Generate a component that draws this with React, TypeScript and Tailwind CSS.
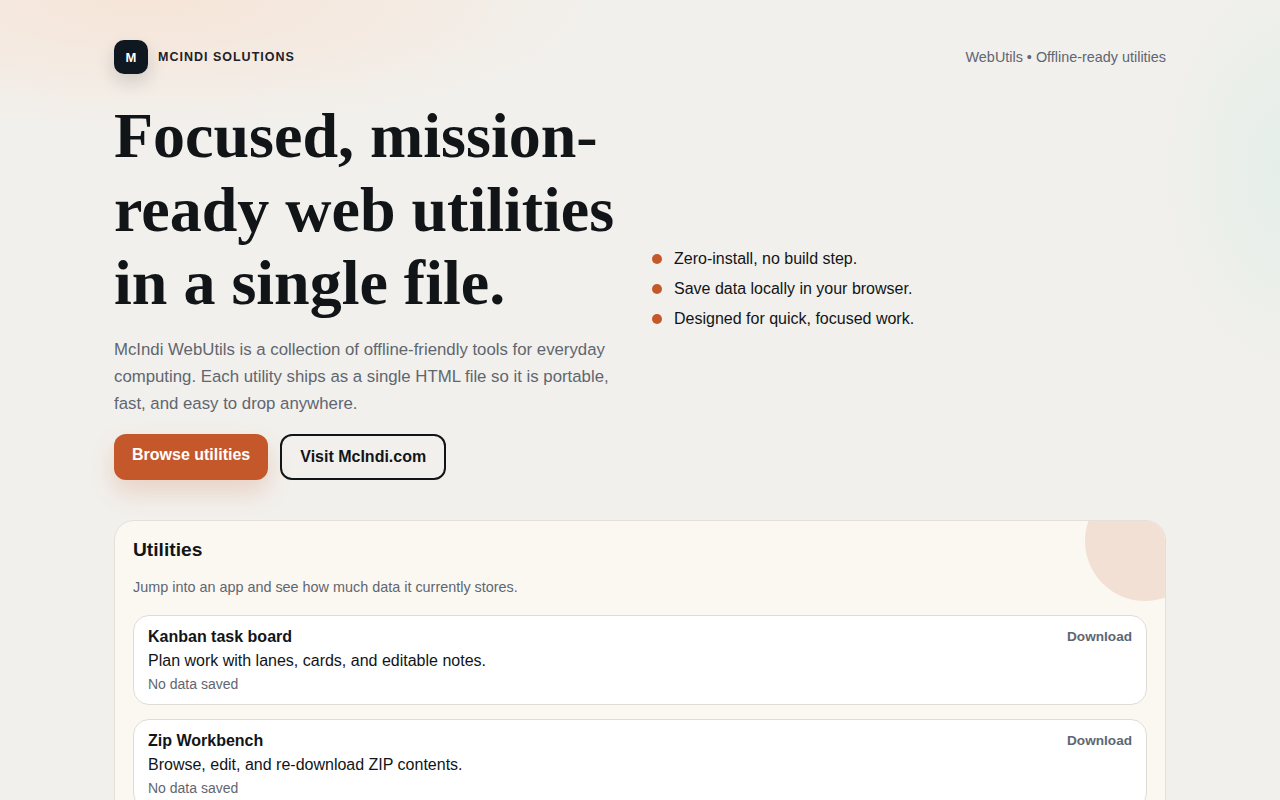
import React from 'react';

const sans = { fontFamily: '"Liberation Sans", Arial, sans-serif' };

const highlights = [
  'Zero-install, no build step.',
  'Save data locally in your browser.',
  'Designed for quick, focused work.',
];

const utilities = [
  { name: 'Kanban task board', description: 'Plan work with lanes, cards, and editable notes.' },
  { name: 'Zip Workbench', description: 'Browse, edit, and re-download ZIP contents.' },
];

function UtilityRow({ name, description }: { name: string; description: string }) {
  return (
    <div className="flex h-[90px] shrink-0 items-start justify-between rounded-[16px] border border-[#e0dcd4] bg-white px-[14px] pt-[11px]">
      <div className="flex flex-col">
        <div className="text-[16px] leading-[20px] font-bold text-[#111518]">{name}</div>
        <div className="mt-[4px] text-[16px] leading-[20px] text-[#111518]">{description}</div>
        <div className="mt-[3px] text-[14px] leading-[20px] text-[#5f6670]">No data saved</div>
      </div>
      <a className="mt-[2px] text-[13.6px] leading-[16px] font-bold text-[#5f6670]">Download</a>
    </div>
  );
}

export default function App() {
  return (
    <div
      className="h-[800px] overflow-hidden bg-[#f2f0ec] bg-[radial-gradient(ellipse_440px_125px_at_150px_0px,#f6e5d8_0%,rgba(246,229,216,0.55)_50%,rgba(246,229,216,0)_100%),radial-gradient(ellipse_140px_220px_at_1290px_170px,#e4eee9_0%,rgba(228,238,233,0)_100%)]"
      style={sans}
    >
      <div className="mx-auto flex w-[1052px] flex-col pt-[40px]">
        {/* Brand bar */}
        <header className="flex items-center justify-between">
          <div className="flex items-center gap-[10px]">
            <div className="flex h-[34px] w-[34px] items-center justify-center rounded-[10px] bg-[#0f1720] pt-[1px] text-[13px] font-bold text-white shadow-[0_8px_18px_rgba(15,23,32,0.15)]">
              M
            </div>
            <span className="text-[12.5px] font-bold tracking-[0.08em] text-[#1d2228]">MCINDI SOLUTIONS</span>
          </div>
          <span className="pt-[2px] text-[14.4px] text-[#5f6670]">WebUtils • Offline-ready utilities</span>
        </header>

        {/* Hero */}
        <section className="mt-[25px] flex items-center gap-[32px]">
          <div className="w-[506px] shrink-0">
            <h1
              className="text-[64px] leading-[73.6px] font-bold text-[#111518]"
              style={{ fontFamily: '"Liberation Serif", "Times New Roman", serif' }}
            >
              Focused, mission-ready web utilities in a single file.
            </h1>
            <p className="mt-[16px] text-[16.8px] leading-[27px] text-[#5f6670]">
              McIndi WebUtils is a collection of offline-friendly tools for everyday computing. Each utility ships as a
              single HTML file so it is portable, fast, and easy to drop anywhere.
            </p>
            <div className="mt-[17px] flex gap-[12px]">
              <a className="flex h-[46px] items-start rounded-[12px] bg-[#c5582b] px-[18px] pt-[11px] text-[16px] leading-[20px] font-bold text-white shadow-[0_12px_24px_rgba(197,88,43,0.2)]">
                Browse utilities
              </a>
              <a className="flex h-[46px] items-center rounded-[12px] border-2 border-[#111518] px-[18px] text-[16px] font-bold text-[#111518]">
                Visit McIndi.com
              </a>
            </div>
          </div>
          <ul className="flex flex-col gap-[10px]">
            {highlights.map((item) => (
              <li key={item} className="flex items-center gap-[12px] text-[16px] leading-[20px] text-[#111518]">
                <span className="h-[10px] w-[10px] rounded-full bg-[#c5582b]" />
                {item}
              </li>
            ))}
          </ul>
        </section>

        {/* Utilities panel */}
        <section className="relative mt-[40px] overflow-hidden rounded-[20px] border border-[#e4e0d8] bg-[#fbf8f2] px-[18px] pt-[17px] pb-[24px]">
          <div className="absolute -top-[40px] -right-[40px] h-[120px] w-[120px] rounded-full bg-[#f3e0d5]" />
          <h2 className="relative text-[19.2px] leading-[24px] font-bold text-[#111518]">Utilities</h2>
          <p className="relative mt-[15px] text-[14.4px] leading-[20px] text-[#5f6670]">
            Jump into an app and see how much data it currently stores.
          </p>
          <div className="relative mt-[18px] flex flex-col gap-[14px]">
            {utilities.map((u) => (
              <UtilityRow key={u.name} name={u.name} description={u.description} />
            ))}
          </div>
        </section>
      </div>
    </div>
  );
}
